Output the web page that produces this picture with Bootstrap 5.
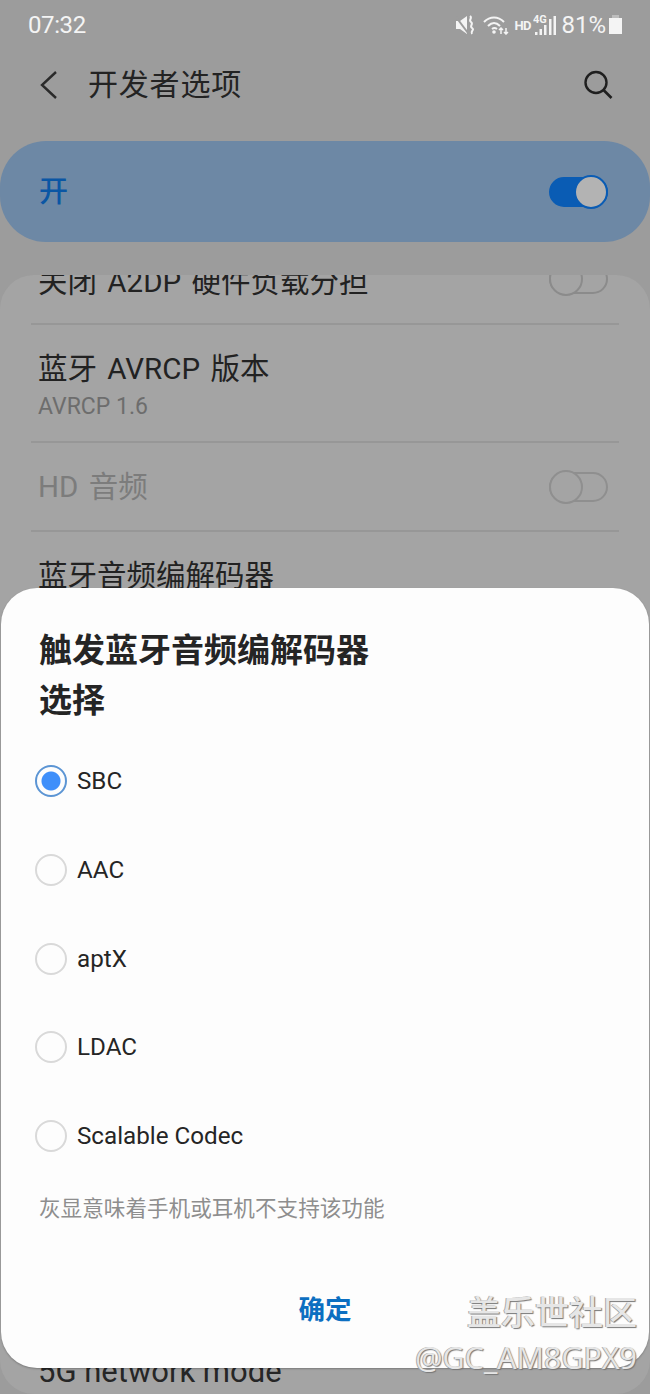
<!DOCTYPE html>
<html lang="zh-CN">
<head>
  <meta charset="UTF-8" />
  <title>开发者选项</title>
  <link href="https://cdn.jsdelivr.net/npm/bootstrap@5.3.0/dist/css/bootstrap.min.css" rel="stylesheet" />
  <style>
    body {
      width: 650px;
      height: 1394px;
      overflow: hidden;
      position: relative;
      background-color: #9c9c9c;
      font-family: Roboto, "Noto Sans CJK SC", sans-serif;
      color: #222;
    }
    .status-strip {
      height: 50px;
      padding: 0 27px 0 28px;
      color: #f4f4f4;
      font-size: 24px;
    }
    .status-time { letter-spacing: -.4px; }
    .status-icons svg { display: block; }
    .hd-mark {
      width: 15px;
      margin: 0 4px 0 5px;
      font-size: 13px;
      font-weight: 700;
      line-height: 1;
      white-space: nowrap;
      letter-spacing: -.6px;
    }
    .batt-icon { margin-left: 2px; }
    .top-title {
      height: 70px;
      padding: 0 37px 0 40px;
      margin-bottom: 21px;
    }
    .top-title h1 {
      font-size: 30px;
      font-weight: 400;
      margin: 0 0 0 30px;
      color: #232323;
      letter-spacing: .8px;
    }
    .master-bar {
      height: 101px;
      margin-bottom: 33px;
      padding: 0 42px 0 39px;
      background-color: #6d88a5;
      border-radius: 46px;
      color: #0a56a4;
      font-size: 29px;
      font-weight: 500;
    }
    .master-bar span:first-child { margin-top: 3px; }
    .settings-panel {
      height: 1119px;
      overflow: hidden;
      background-color: #a4a4a4;
      border-radius: 34px;
      padding: 0 31px;
    }
    .set-row {
      padding: 0 11px 0 7px;
      border-bottom: 2px solid #979797;
      font-size: 29.5px;
      line-height: 40px;
      word-spacing: 3px;
    }
    .set-row.clipped { height: 50px; overflow: hidden; align-items: flex-start !important; }
    .set-row.clipped > * { margin-top: -13px; }
    .set-row.tall { height: 118px; padding-top: 24px; }
    .set-row.mid { height: 89px; }
    .set-row .sub { font-size: 23px; line-height: 32px; color: #6d6d6d; margin-top: 2px; word-spacing: 0; }
    .set-row.dim { color: #7c7c7c; }
    .set-row.last { height: 60px; border: 0; padding-top: 24px; }
    .hidden-gap { height: 760px; }
    .set-row.net { border: 0; color: #262626; font-size: 31px; word-spacing: 0; }
    .tgl {
      width: 59px;
      height: 34px;
      position: relative;
      flex: none;
    }
    .tgl::before {
      content: "";
      position: absolute;
      left: 0; right: 0; top: 2px; bottom: 2px;
      border: 2px solid #8b8b8b;
      border-radius: 15px;
    }
    .tgl::after {
      content: "";
      position: absolute;
      left: 0; top: 0;
      width: 34px; height: 34px;
      border: 2px solid #8b8b8b;
      border-radius: 50%;
      background-color: #a4a4a4;
    }
    .tgl.on::before { background-color: #0a5cb4; border-color: #0a5cb4; }
    .tgl.on::after { left: 25px; background-color: #b3b3b3; border-color: #0a5cb4; }
    .tgl.off-dim::before, .tgl.off-dim::after { border-color: #8f8f8f; }
    .sheet {
      position: absolute;
      left: 1px;
      right: 1px;
      top: 588px;
      height: 780px;
      background-color: #fdfdfd;
      border: 0;
      border-radius: 36px;
      padding: 38px 38px 0;
      box-shadow: 0 1px 2px rgba(0,0,0,.25);
    }
    .sheet h2 {
      font-size: 33px;
      line-height: 50px;
      font-weight: 700;
      color: #252525;
      margin: 0 0 11px;
    }
    .codec-line {
      display: flex;
      align-items: center;
      height: 88.7px;
      min-height: 0;
      padding: 0;
      margin: 0 0 0 -4px;
      font-size: 24.2px;
      color: #252525;
    }
    .codec-line .form-check-input {
      float: none;
      width: 32px;
      height: 32px;
      margin: 0 10px 0 0;
      background-color: transparent;
      border: 2px solid #d9d9d9;
      opacity: 1;
    }
    .codec-line .form-check-input:checked {
      border-color: #5c95d4;
      background-color: transparent;
      background-image: radial-gradient(circle, #3f8ffa 0, #3f8ffa 9px, transparent 10px);
    }
    .codec-line .form-check-label { opacity: 1; color: #252525; }
    .sheet-note {
      font-size: 21.6px;
      color: #8e8e8e;
      margin: 14px 0 0;
      line-height: 30px;
    }
    .sheet-foot { margin-top: 65px; }
    .sheet-foot .btn {
      font-size: 26.5px;
      font-weight: 700;
      color: #0c6fc1;
      text-decoration: none;
      padding: 0;
      line-height: 40px;
    }
    .wm-stamp {
      position: absolute;
      right: 13px;
      top: 1291px;
      text-align: right;
      color: #e6e6e6;
      text-shadow: 1px 1px 1px #777, -1px 0 0 #aaa;
    }
    .wm-stamp .wm-a { font-size: 34px; line-height: 44px; font-weight: 500; }
    .wm-stamp .wm-b { font-size: 30.5px; line-height: 44px; font-family: "Open Sans", sans-serif; }
  </style>
</head>
<body>
  <!-- status bar -->
  <div class="status-strip d-flex justify-content-between align-items-center">
    <span class="status-time">07:32</span>
    <div class="status-icons d-flex align-items-center">
      <svg width="20" height="20" viewBox="0 0 20 20" class="me-2">
        <path d="M1 6h4l7-5v18l-7-5H1z" fill="#f4f4f4"/>
        <path d="M1 2l12 16" stroke="#9c9c9c" stroke-width="2"/>
        <path d="M15 1c3 2-2 4 1 6s-2 4 1 6-2 3 0 6" fill="none" stroke="#f4f4f4" stroke-width="2"/>
      </svg>
      <svg width="26" height="20" viewBox="0 0 26 20">
        <g fill="none" stroke="#f4f4f4" stroke-width="2">
          <path d="M1 7c6-6 14-6 20 0"/>
          <path d="M5 11c4-4 8-4 12 0"/>
          <path d="M9 14c2-1.500 3-1.500 5 0"/>
        </g>
        <circle cx="11" cy="17" r="1.800" fill="#f4f4f4"/>
        <path d="M18 13v6M16 15l2-2 2 2M23 13v6M21 17l2 2 2-2" fill="none" stroke="#f4f4f4" stroke-width="1.500"/>
      </svg>
      <span class="hd-mark">HD</span>
      <svg width="24" height="22" viewBox="0 0 24 22" class="me-1">
        <text x="0" y="9" font-size="11" font-weight="700" font-family="Roboto, sans-serif" fill="#f4f4f4">4G</text>
        <path d="M2 18h2.500v3H2zM6.500 15H9v6H6.500zM11 11h2.500v10H11zM16 5h2.500v16H16zM20.500 2H23v19h-2.500z" fill="#f4f4f4"/>
      </svg>
      <span>81%</span>
      <svg width="15" height="20" viewBox="0 0 15 20" class="batt-icon">
        <path d="M4 0h7v3H4z" fill="#bdbdbd"/>
        <path d="M1 3h13v16H1z" fill="#f4f4f4"/>
      </svg>
    </div>
  </div>

  <!-- title -->
  <div class="top-title d-flex align-items-center">
    <svg width="18" height="28" viewBox="0 0 18 28">
      <path d="M16 1L2 14l14 13" fill="none" stroke="#2a2a2a" stroke-width="2.400"/>
    </svg>
    <h1>开发者选项</h1>
    <svg class="ms-auto" width="30" height="30" viewBox="0 0 30 30">
      <circle cx="13" cy="12.500" r="10.500" fill="none" stroke="#1f1f1f" stroke-width="2.400"/>
      <path d="M20.500 20l8 8" stroke="#1f1f1f" stroke-width="2.600"/>
    </svg>
  </div>

  <div class="master-bar d-flex justify-content-between align-items-center">
    <span>开</span>
    <span class="tgl on"></span>
  </div>

  <!-- list under the sheet -->
  <div class="settings-panel">
    <div class="set-row clipped d-flex justify-content-between align-items-center">
      <span>关闭 A2DP 硬件负载分担</span>
      <span class="tgl"></span>
    </div>
    <div class="set-row tall">
      <div>蓝牙 AVRCP 版本</div>
      <div class="sub">AVRCP 1.6</div>
    </div>
    <div class="set-row mid dim d-flex justify-content-between align-items-center">
      <span>HD 音频</span>
      <span class="tgl off-dim"></span>
    </div>
    <div class="set-row last">蓝牙音频编解码器</div>
    <div class="hidden-gap"></div>
    <div class="set-row net">5G network mode</div>
  </div>

  <!-- codec dialog -->
  <div class="sheet card">
    <h2>触发蓝牙音频编解码器<br>选择</h2>
    <div class="form-check codec-line">
      <input class="form-check-input" type="radio" name="codec" id="c1" checked>
      <label class="form-check-label" for="c1">SBC</label>
    </div>
    <div class="form-check codec-line">
      <input class="form-check-input" type="radio" name="codec" id="c2">
      <label class="form-check-label" for="c2">AAC</label>
    </div>
    <div class="form-check codec-line">
      <input class="form-check-input" type="radio" name="codec" id="c3">
      <label class="form-check-label" for="c3">aptX</label>
    </div>
    <div class="form-check codec-line">
      <input class="form-check-input" type="radio" name="codec" id="c4">
      <label class="form-check-label" for="c4">LDAC</label>
    </div>
    <div class="form-check codec-line">
      <input class="form-check-input" type="radio" name="codec" id="c5">
      <label class="form-check-label" for="c5">Scalable Codec</label>
    </div>
    <p class="sheet-note">灰显意味着手机或耳机不支持该功能</p>
    <div class="sheet-foot text-center">
      <button type="button" class="btn btn-link">确定</button>
    </div>
  </div>

  <div class="wm-stamp">
    <div class="wm-a">盖乐世社区</div>
    <div class="wm-b">@GC_AM8GPX9</div>
  </div>

  <script src="https://cdn.jsdelivr.net/npm/bootstrap@5.3.0/dist/js/bootstrap.bundle.min.js"></script>
</body>
</html>
